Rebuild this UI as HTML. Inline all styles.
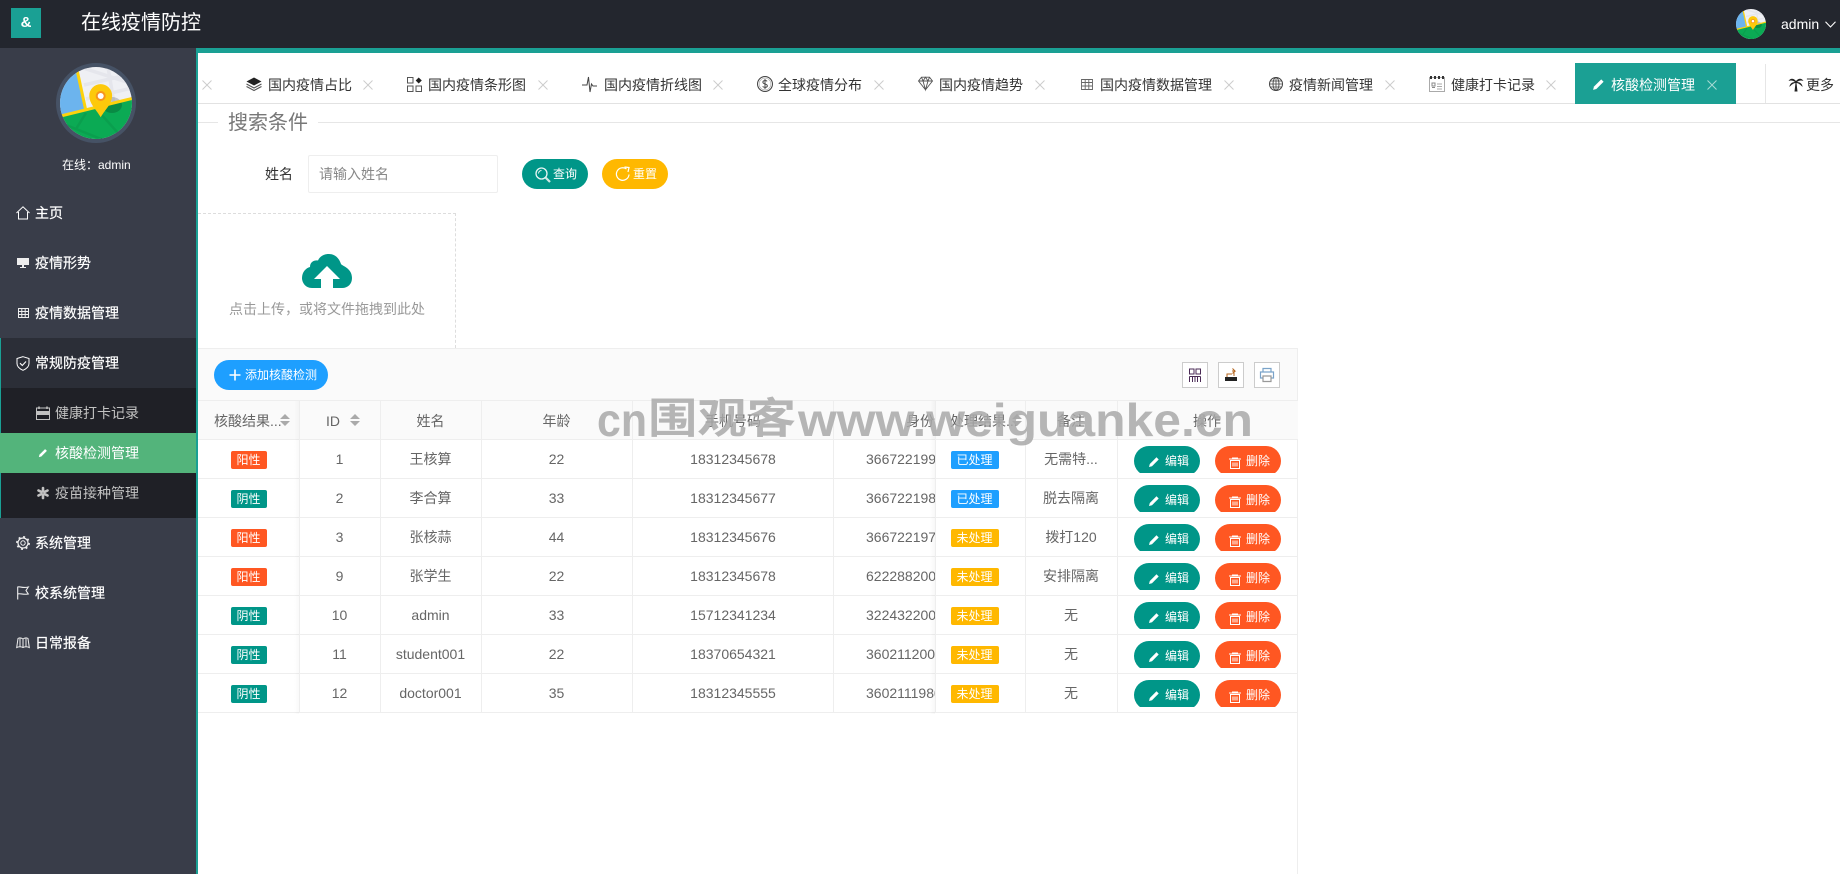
<!DOCTYPE html>
<html lang="zh-CN">
<head>
<meta charset="utf-8">
<title>在线疫情防控</title>
<style>
*{margin:0;padding:0;box-sizing:border-box}
html,body{width:1840px;height:874px;overflow:hidden;background:#fff}
body{position:relative;font-family:"Liberation Sans","Noto Sans CJK SC",sans-serif;font-size:14px;color:#666}
.a{position:absolute;white-space:nowrap}
svg{display:block;overflow:visible}
#hd{left:0;top:0;width:1840px;height:48px;background:#23262e}
#teal{left:196px;top:48px;width:1644px;height:5px;background:#1aa094}
#sb{left:0;top:48px;width:196px;height:826px;background:#393d49}
#sbl{left:196px;top:48px;width:2px;height:826px;background:#1aa094}
.mi{left:35px;color:#fff;font-size:14px;line-height:20px;height:20px;-webkit-text-stroke:.2px #fff}
.si{left:55px;color:#c2c2c2;font-size:14px;line-height:20px;height:20px}
.ic{position:absolute}
.tt{top:75px;color:#333;line-height:20px;height:20px}
.x{position:absolute;top:80px;width:10px;height:10px}
.row{position:absolute;left:198px;width:1100px;height:39px}
.row>div,.hr>div{position:absolute;top:0;height:38px;line-height:41px;text-align:center;white-space:nowrap;overflow:hidden}
.c1{left:0;width:101px}.c2{left:101px;width:81px}.c3{left:182px;width:101px}.c4{left:283px;width:151px}.c5{left:434px;width:202px}
.c6{left:636px;width:101px;text-align:left!important;padding-left:32px}
.c7{left:737px;width:91px}.c8{left:827px;width:92px}.c9{left:919px;width:180px}
.tag{display:inline-block;height:18px;line-height:18px;border-radius:2px;color:#fff;font-size:12px;text-align:center;vertical-align:top;margin-top:12px}
.t2{width:36px}.t3{width:48px;margin-left:-12px}
.r{background:#ff5722}.g{background:#009688}.b{background:#1e9fff}.y{background:#ffb800}
.bw{position:absolute;top:7px;width:66px;height:27px;overflow:hidden}
.bi{width:66px;height:30px;border-radius:15px;color:#fff;font-size:12px;position:relative}
.bi span{position:absolute;left:31px;top:0;line-height:30px;height:30px}
.bi svg{position:absolute;left:14px;top:9px}
.vl{position:absolute;top:400px;width:1px;height:312px;background:#eee}
.hl{position:absolute;left:198px;width:1100px;height:1px;background:#eee}
.tb{position:absolute;top:362px;width:26px;height:26px;border:1px solid #ccc;background:#fff}
.tb svg{position:absolute;left:4px;top:4px}
</style>
</head>
<body>
<svg width="0" height="0" style="position:absolute">
<defs>
<clipPath id="mc"><circle cx="40" cy="40" r="36"/></clipPath>
<symbol id="map" viewBox="0 0 80 80">
<g clip-path="url(#mc)">
<rect width="80" height="80" fill="#eff0f4"/>
<path d="M24 4 L80 22 M28 22 L80 10 M52 4 L58 40 M30 36 L80 24" stroke="#e5e6ec" stroke-width="3.5" fill="none"/>
<path d="M0 0 H20 L29.500 47 L0 54Z" fill="#6cb4ee"/>
<path d="M0 54.200 L80 34.500 V80 H0Z" fill="#0baa54"/>
<path d="M20 66 L30 50 M10 62 L50 78 M44 50 L62 70" stroke="#0a9f4e" stroke-width="2.500" fill="none"/>
<ellipse cx="56" cy="42" rx="10" ry="8" fill="#000" opacity=".18"/>
<path d="M20 2 L29.500 46" stroke="#fdd20c" stroke-width="3" fill="none"/>
<path d="M0 54.200 L80 34.500" stroke="#fdd20c" stroke-width="3" fill="none"/>
<path d="M44.700 54.300 C40 46 33.300 41 33.300 32.500 A11.400 11.400 0 0 1 56.100 32.500 C56.100 41 49.400 46 44.700 54.300Z" fill="#fdc90b"/>
<circle cx="44.700" cy="33" r="5" fill="#f7941d"/>
<circle cx="44.700" cy="33" r="3" fill="#fff"/>
</g>
</symbol>
<symbol id="pen" viewBox="0 0 12 12"><path d="M1 11 L1.800 8 L8.500 1.300 L10.700 3.500 L4 10.200Z" fill="currentColor"/></symbol>
<symbol id="xx" viewBox="0 0 10 10"><path d="M.5 .5 L9.500 9.500 M9.500 .5 L.5 9.500" stroke="currentColor" stroke-width="1" fill="none"/></symbol>
<symbol id="sort" viewBox="0 0 10 12"><path d="M5 0 L10 5 H0Z M0 7 H10 L5 12Z" fill="#aaa"/></symbol>
</defs>
</svg>

<div class="a" id="hd"></div>
<div class="a" id="teal"></div>
<div class="a" style="left:11px;top:8px;width:30px;height:30px;background:#1aa094;color:#fff;text-align:center;line-height:29px;font-size:15px;font-weight:bold">&amp;</div>
<div class="a" style="left:81px;top:9px;color:#fff;font-size:20px;line-height:28px">在线疫情防控</div>
<svg class="a" style="left:1736px;top:9px" width="30" height="30" viewBox="4 4 72 72"><use href="#map" x="0" y="0" width="80" height="80"/></svg>
<div class="a" style="left:1781px;top:14px;color:#fff;font-size:14px;line-height:20px">admin</div>
<svg class="a" style="left:1825px;top:21px" width="11" height="7" viewBox="0 0 11 7"><path d="M.5 .8 L5.500 6 L10.500 .8" stroke="#fff" stroke-width="1.100" fill="none"/></svg>

<div class="a" id="sb"></div>
<div class="a" id="sbl"></div>
<svg class="a" style="left:52px;top:59px" width="88" height="88" viewBox="0 0 88 88"><circle cx="44" cy="44" r="38" fill="none" stroke="#465265" stroke-width="4"/><use href="#map" x="4" y="4" width="80" height="80"/></svg>
<div class="a" style="left:62px;top:155px;color:#fff;font-size:12px;line-height:20px">在线：admin</div>

<div class="a" style="left:0;top:338px;width:196px;height:50px;background:#2b2e37"></div>
<div class="a" style="left:0;top:388px;width:196px;height:130px;background:#1f2026"></div>
<div class="a" style="left:0;top:433px;width:196px;height:40px;background:#53b47b"></div>
<div class="a" style="left:0;top:338px;width:1px;height:95px;background:#1aa094"></div>
<div class="a" style="left:0;top:473px;width:1px;height:45px;background:#1aa094"></div>

<svg class="a" style="left:16px;top:206px" width="14" height="14" viewBox="0 0 14 14"><path d="M.5 7 L7 .8 L13.500 7 M2.500 6 V13 H11.500 V6" stroke="#fff" stroke-width="1" fill="none"/></svg>
<div class="a mi" style="top:203px">主页</div>
<svg class="a" style="left:16px;top:257px" width="14" height="12" viewBox="0 0 14 12"><path d="M1 1 H13 V8 H8 V10 H10 V11 H4 V10 H6 V8 H1Z" fill="#eee"/></svg>
<div class="a mi" style="top:253px">疫情形势</div>
<svg class="a" style="left:18px;top:308px" width="11" height="10" viewBox="0 0 11 10"><path d="M.5 .5 H10.500 V9.500 H.5Z M.5 3.500 H10.500 M.5 6.500 H10.500 M3.800 .5 V9.500 M7.200 .5 V9.500" stroke="#eee" stroke-width="1" fill="none"/></svg>
<div class="a mi" style="top:303px">疫情数据管理</div>
<svg class="a" style="left:16px;top:356px" width="14" height="15" viewBox="0 0 14 15"><path d="M7 .7 L13 2.500 V7.500 C13 11 10 13 7 14.300 C4 13 1 11 1 7.500 V2.500Z" stroke="#fff" stroke-width="1" fill="none"/><path d="M4 7.200 L6.300 9.500 L10 5.500" stroke="#fff" stroke-width="1.100" fill="none"/></svg>
<div class="a mi" style="top:353px">常规防疫管理</div>
<svg class="a" style="left:36px;top:406px" width="14" height="14" viewBox="0 0 14 14"><path d="M.5 2 H13.500 V13.500 H.5Z" stroke="#c2c2c2" fill="none"/><path d="M1 5 H13 V9 H1Z" fill="#c2c2c2"/><path d="M3 .5 V3 M11 .5 V3" stroke="#c2c2c2" stroke-width="1.500"/></svg>
<div class="a si" style="top:403px">健康打卡记录</div>
<svg class="a" style="left:38px;top:448px;color:#fff" width="10" height="10"><use href="#pen" width="10" height="10"/></svg>
<div class="a si" style="top:443px;color:#fff">核酸检测管理</div>
<svg class="a" style="left:37px;top:487px" width="12" height="12" viewBox="0 0 12 12"><g stroke="#c2c2c2" stroke-width="2.600" fill="none" stroke-linecap="round"><path d="M6 1 V4.500 M6 7.500 V11 M1.500 3.500 L4.500 5 M7.500 7 L10.500 8.500 M1.500 8.500 L4.500 7 M7.500 5 L10.500 3.500"/></g></svg>
<div class="a si" style="top:483px">疫苗接种管理</div>
<svg class="a" style="left:16px;top:536px" width="14" height="14" viewBox="0 0 14 14"><circle cx="7" cy="7" r="5" stroke="#eee" stroke-width="1.200" fill="none"/><circle cx="7" cy="7" r="2.200" stroke="#eee" stroke-width="1" fill="none"/><circle cx="7" cy="7" r="6.200" stroke="#eee" stroke-width="1.500" stroke-dasharray="2 2.860" fill="none"/></svg>
<div class="a mi" style="top:533px">系统管理</div>
<svg class="a" style="left:17px;top:586px" width="12" height="14" viewBox="0 0 12 14"><path d="M.7 13.500 V1 C3 0 5 2.500 11.300 1 L9 4.500 L11.300 8 C6 9 3 7 .7 8" stroke="#eee" stroke-width="1.100" fill="none"/></svg>
<div class="a mi" style="top:583px">校系统管理</div>
<svg class="a" style="left:16px;top:637px" width="14" height="12" viewBox="0 0 14 12"><path d="M7 2 C5 .7 3 .7 2 1.500 L.7 10.500 C3 9.500 5 9.500 7 10.500 C9 9.500 11 9.500 13.300 10.500 L12 1.500 C11 .7 9 .7 7 2Z M7 2 V10.500 M4 1.500 V9.500 M10 1.500 V9.500" stroke="#eee" stroke-width="1" fill="none"/></svg>
<div class="a mi" style="top:633px">日常报备</div>

<!-- tabs -->
<div class="a" style="left:198px;top:103px;width:1642px;height:1px;background:#e2e2e2"></div>
<svg class="x" style="left:202px;color:#ccc"><use href="#xx" width="10" height="10"/></svg>

<svg class="a" style="left:246px;top:77px" width="16" height="15" viewBox="0 0 16 15"><path d="M8 .5 L15.500 4.500 L8 8.500 L.5 4.500Z" fill="#222"/><path d="M.5 7 L8 11 L15.500 7 M.5 9.500 L8 13.500 L15.500 9.500" stroke="#555" stroke-width="1.100" fill="none"/></svg>
<div class="a tt" style="left:268px">国内疫情占比</div>
<svg class="x" style="left:363px;color:#ccc"><use href="#xx" width="10" height="10"/></svg>

<svg class="a" style="left:407px;top:77px" width="15" height="15" viewBox="0 0 15 15"><path d="M.5 .5 H6 V6 H.5Z M.5 9 H6 V14.500 H.5Z M9 9 H14.500 V14.500 H9Z" stroke="#555" fill="none"/><path d="M11.700 .5 L14.800 3.500 L11.700 6.500 L8.700 3.500Z" fill="#222"/></svg>
<div class="a tt" style="left:428px">国内疫情条形图</div>
<svg class="x" style="left:538px;color:#ccc"><use href="#xx" width="10" height="10"/></svg>

<svg class="a" style="left:582px;top:76px" width="15" height="17" viewBox="0 0 15 17"><path d="M0 9 H3 L5 9 L6.500 1 L8 16 L9.500 8 L11 10 H15" stroke="#444" fill="none"/></svg>
<div class="a tt" style="left:604px">国内疫情折线图</div>
<svg class="x" style="left:713px;color:#ccc"><use href="#xx" width="10" height="10"/></svg>

<svg class="a" style="left:757px;top:76px" width="16" height="16" viewBox="0 0 15 15"><circle cx="7.500" cy="7.500" r="7" stroke="#444" fill="none"/><circle cx="7.500" cy="7.500" r="5.500" stroke="#999" stroke-width=".5" fill="none"/><path d="M9.500 5 C8.500 3.800 5.500 4 5.500 5.800 C5.500 8 9.700 7 9.700 9.300 C9.700 11 6.500 11 5.300 9.800 M7.500 2.800 V12.200" stroke="#444" stroke-width=".9" fill="none"/></svg>
<div class="a tt" style="left:778px">全球疫情分布</div>
<svg class="x" style="left:874px;color:#ccc"><use href="#xx" width="10" height="10"/></svg>

<svg class="a" style="left:918px;top:76px" width="15" height="15" viewBox="0 0 15 14"><path d="M3.500 .7 H11.500 L14.500 4.500 L7.500 13.300 L.5 4.500Z M.5 4.500 H14.500 M5 4.500 L7.500 13.300 L10 4.500 M3.500 .7 L5 4.500 L7.500 .7 L10 4.500 L11.500 .7" stroke="#555" stroke-width=".9" fill="none"/></svg>
<div class="a tt" style="left:939px">国内疫情趋势</div>
<svg class="x" style="left:1035px;color:#ccc"><use href="#xx" width="10" height="10"/></svg>

<svg class="a" style="left:1081px;top:79px" width="12" height="11" viewBox="0 0 12 11"><path d="M.5 .5 H11.500 V10.500 H.5Z M.5 3.500 H11.500 M.5 7 H11.500 M4.200 .5 V10.500 M7.800 .5 V10.500" stroke="#666" stroke-width=".9" fill="none"/></svg>
<div class="a tt" style="left:1100px">国内疫情数据管理</div>
<svg class="x" style="left:1224px;color:#ccc"><use href="#xx" width="10" height="10"/></svg>

<svg class="a" style="left:1269px;top:77px" width="14" height="14" viewBox="0 0 14 14"><circle cx="7" cy="7" r="6.500" stroke="#444" fill="none"/><ellipse cx="7" cy="7" rx="3" ry="6.500" stroke="#444" stroke-width=".9" fill="none"/><path d="M.5 7 H13.500 M1.300 4 H12.700 M1.300 10 H12.700 M7 .5 V13.500" stroke="#444" stroke-width=".8" fill="none"/></svg>
<div class="a tt" style="left:1289px">疫情新闻管理</div>
<svg class="x" style="left:1385px;color:#ccc"><use href="#xx" width="10" height="10"/></svg>

<svg class="a" style="left:1429px;top:75px" width="16" height="17" viewBox="0 0 16 17"><path d="M.5 2.500 H15.500 V16.500 H.5Z" stroke="#aaa" fill="none"/><path d="M1 1 H3 V4 H1Z M5 1 H7 V4 H5Z M9 1 H11 V4 H9Z M13 1 H15 V4 H13Z" fill="#333"/><path d="M3 8 H6 V11 H3Z M3 12.500 H6" stroke="#888" fill="none"/><path d="M8 9 H13 M8 11.500 H13 M8 14 H13" stroke="#aaa"/></svg>
<div class="a tt" style="left:1451px">健康打卡记录</div>
<svg class="x" style="left:1546px;color:#ccc"><use href="#xx" width="10" height="10"/></svg>

<div class="a" style="left:1575px;top:63px;width:161px;height:41px;background:#1ba094"></div>
<svg class="a" style="left:1592px;top:78px;color:#fff" width="13" height="13"><use href="#pen" width="13" height="13"/></svg>
<div class="a tt" style="left:1611px;color:#fff">核酸检测管理</div>
<svg class="x" style="left:1707px;color:#a8dad5"><use href="#xx" width="10" height="10"/></svg>

<div class="a" style="left:1765px;top:64px;width:1px;height:39px;background:#e6e6e6"></div>
<svg class="a" style="left:1788px;top:76px" width="16" height="16" viewBox="0 0 16 16"><path d="M8 5 C5 1.500 2 2.500 .5 5 C3 4 5 4.500 7 6 C4 6 1.500 8 1.500 11 C3.500 8.500 6 7 7.500 7 L6.500 15.500 H9.500 L8.500 7 C10 7 12.500 8.500 14.500 11 C14.500 8 12 6 9 6 C11 4.500 13 4 15.500 5 C14 2.500 11 1.500 8 5Z" fill="#222"/></svg>
<div class="a tt" style="left:1806px">更多</div>

<!-- search -->
<div class="a" style="left:198px;top:122px;width:20px;height:1px;background:#e6e6e6"></div>
<div class="a" style="left:318px;top:122px;width:1522px;height:1px;background:#e6e6e6"></div>
<div class="a" style="left:228px;top:109px;font-size:20px;line-height:28px;color:#777">搜索条件</div>
<div class="a" style="left:265px;top:164px;line-height:20px;color:#333">姓名</div>
<div class="a" style="left:308px;top:155px;width:190px;height:38px;border:1px solid #eee;border-radius:2px;line-height:36px;padding-left:10px;color:#888">请输入姓名</div>
<div class="a" style="left:522px;top:159px;width:66px;height:30px;border-radius:15px;background:#009688;color:#fff;font-size:12px;line-height:30px;padding-left:31px">查询</div>
<svg class="a" style="left:535px;top:167px" width="16" height="16" viewBox="0 0 16 16"><circle cx="6.500" cy="6.500" r="5.500" stroke="#e8f5f3" stroke-width="1.300" fill="none"/><path d="M3.500 6.500 A3 3 0 0 1 6.500 3.500" stroke="#e8f5f3" fill="none"/><path d="M10.500 10.500 L15 15" stroke="#cfe8e5" stroke-width="2.200"/></svg>
<div class="a" style="left:602px;top:159px;width:66px;height:30px;border-radius:15px;background:#ffb800;color:#fff;font-size:12px;line-height:30px;padding-left:31px">重置</div>
<svg class="a" style="left:615px;top:166px" width="16" height="16" viewBox="0 0 16 16"><path d="M14 8.500 A6.300 6.300 0 1 1 11.500 3 M9.500 1 L14 1.500 L13 6" stroke="#fff" stroke-width="1.200" fill="none"/></svg>

<!-- upload -->
<div class="a" style="left:198px;top:213px;width:258px;height:135px;border:1px dashed #ddd;border-left:0;border-bottom:0"></div>
<svg class="a" style="left:302px;top:254px" width="50" height="34" viewBox="0 0 50 34"><path d="M10 34 C3 34 0 28 0 24 C0 18 4 14 8 13 C8 8 12 6 16 6.500 C18 2 22 0 27 0 C33 0 37 4 39 10 C40 12 50 14 50 24 C50 30 46 34 40 34 H31 V25 H38 L25 12 L12 25 H19 V34Z" fill="#009688"/></svg>
<div class="a" style="left:229px;top:299px;color:#999;line-height:20px">点击上传，或将文件拖拽到此处</div>

<!-- toolbar -->
<div class="a" style="left:198px;top:348px;width:1100px;height:53px;background:#fafafa;border-top:1px solid #eee;border-bottom:1px solid #eee"></div>
<div class="a" style="left:1297px;top:348px;width:1px;height:526px;background:#eee"></div>
<div class="a" style="left:214px;top:360px;width:114px;height:30px;border-radius:15px;background:#1e9fff;color:#fff;font-size:12px;line-height:30px;padding-left:31px">添加核酸检测</div>
<svg class="a" style="left:229px;top:369px" width="12" height="12" viewBox="0 0 12 12"><path d="M6 .5 V11.500 M.5 6 H11.500" stroke="#fff" stroke-width="1.600"/></svg>
<div class="tb" style="left:1182px"><svg width="16" height="16" viewBox="0 0 16 16"><path d="M2.500 2 H7 V7 H2.500Z M9 2 H13.500 V7 H9Z M2.500 9.500 V15 M5.500 9.500 V15 M8 9.500 V15 M10.500 9.500 V15 M13.500 9.500 V15 M2.500 9.500 H13.500" stroke="#4a2a55" fill="none"/></svg></div>
<div class="tb" style="left:1218px"><svg width="16" height="16" viewBox="0 0 16 16"><path d="M2 10 H14 V14 H2Z" fill="#222"/><path d="M4 10 V7 H9 M9 4 H12 L9.500 1.500 M12 4 L9.500 6.500 M11 5 V9" stroke="#b5651d" fill="none"/></svg></div>
<div class="tb" style="left:1254px"><svg width="16" height="16" viewBox="0 0 16 16"><path d="M4 5 V1.500 H12 V5 M4 11 H1.500 V5 H14.500 V11 H12" stroke="#7aa3c9" stroke-width="1.200" fill="none"/><path d="M4 9 H12 V14.500 H4Z" stroke="#999" stroke-width="1.200" fill="none"/></svg></div>

<!-- table header -->
<div class="a" style="left:198px;top:401px;width:1100px;height:38px;background:#fafafa"></div>
<div class="hl" style="top:439px"></div>
<div class="hl" style="top:478px"></div>
<div class="hl" style="top:517px"></div>
<div class="hl" style="top:556px"></div>
<div class="hl" style="top:595px"></div>
<div class="hl" style="top:634px"></div>
<div class="hl" style="top:673px"></div>
<div class="hl" style="top:712px"></div>
<div class="vl" style="left:380px"></div>
<div class="vl" style="left:481px"></div>
<div class="vl" style="left:632px"></div>
<div class="vl" style="left:833px"></div>
<div class="vl" style="left:1025px"></div>
<div class="vl" style="left:1117px"></div>

<div class="row hr" style="top:401px">
<div class="c1" style="text-align:left;padding-left:16px">核酸结果...</div>
<div class="c2" style="text-align:left;padding-left:27px">ID</div>
<div class="c3">姓名</div>
<div class="c4">年龄</div>
<div class="c5">手机号码</div>
<div class="c6" style="padding-left:72px">身份证号码</div>
<div class="c7" style="text-align:left;padding-left:15px">处理结果...</div>
<div class="c8">备注</div>
<div class="c9">操作</div>
</div>

<div class="row" style="top:439px"><div class="c1"><span class="tag t2 r">阳性</span></div><div class="c2">1</div><div class="c3">王核算</div><div class="c4">22</div><div class="c5">18312345678</div><div class="c6">366722199001011234</div><div class="c7"><span class="tag t3 b">已处理</span></div><div class="c8">无需特...</div></div>
<div class="row" style="top:478px"><div class="c1"><span class="tag t2 g">阴性</span></div><div class="c2">2</div><div class="c3">李合算</div><div class="c4">33</div><div class="c5">18312345677</div><div class="c6">366722198001011234</div><div class="c7"><span class="tag t3 b">已处理</span></div><div class="c8">脱去隔离</div></div>
<div class="row" style="top:517px"><div class="c1"><span class="tag t2 r">阳性</span></div><div class="c2">3</div><div class="c3">张核蒜</div><div class="c4">44</div><div class="c5">18312345676</div><div class="c6">366722197001011234</div><div class="c7"><span class="tag t3 y">未处理</span></div><div class="c8">拨打120</div></div>
<div class="row" style="top:556px"><div class="c1"><span class="tag t2 r">阳性</span></div><div class="c2">9</div><div class="c3">张学生</div><div class="c4">22</div><div class="c5">18312345678</div><div class="c6">622288200001011234</div><div class="c7"><span class="tag t3 y">未处理</span></div><div class="c8">安排隔离</div></div>
<div class="row" style="top:595px"><div class="c1"><span class="tag t2 g">阴性</span></div><div class="c2">10</div><div class="c3">admin</div><div class="c4">33</div><div class="c5">15712341234</div><div class="c6">322432200001011234</div><div class="c7"><span class="tag t3 y">未处理</span></div><div class="c8">无</div></div>
<div class="row" style="top:634px"><div class="c1"><span class="tag t2 g">阴性</span></div><div class="c2">11</div><div class="c3">student001</div><div class="c4">22</div><div class="c5">18370654321</div><div class="c6">360211200001011234</div><div class="c7"><span class="tag t3 y">未处理</span></div><div class="c8">无</div></div>
<div class="row" style="top:673px"><div class="c1"><span class="tag t2 g">阴性</span></div><div class="c2">12</div><div class="c3">doctor001</div><div class="c4">35</div><div class="c5">18312345555</div><div class="c6">360211198001011234</div><div class="c7"><span class="tag t3 y">未处理</span></div><div class="c8">无</div></div>

<!-- fixed col lines & shadows -->
<div class="a" style="left:299px;top:401px;width:1px;height:311px;background:#eee"></div>
<div class="a" style="left:294px;top:401px;width:5px;height:313px;background:linear-gradient(to right,rgba(0,0,0,0),rgba(0,0,0,.025))"></div>
<div class="a" style="left:935px;top:401px;width:1px;height:311px;background:#eee"></div>
<div class="a" style="left:930px;top:401px;width:5px;height:313px;background:linear-gradient(to left,rgba(0,0,0,.03),rgba(0,0,0,0))"></div>

<svg class="a" style="left:280px;top:414px" width="10" height="12"><use href="#sort" width="10" height="12"/></svg>
<svg class="a" style="left:350px;top:414px" width="10" height="12"><use href="#sort" width="10" height="12"/></svg>
<svg class="a" style="left:1012px;top:414px" width="10" height="12"><use href="#sort" width="10" height="12"/></svg>

<!-- action buttons -->
<div class="bw" style="left:1134px;top:446px"><div class="bi g"><svg width="12" height="12" style="color:#fff;top:10px"><use href="#pen" width="12" height="12"/></svg><span>编辑</span></div></div>
<div class="bw" style="left:1215px;top:446px"><div class="bi r"><svg width="12" height="12" viewBox="0 0 12 12" style="top:11px"><path d="M0 2 H12 M3 1 H9 M1.500 3.500 H10.500 V11.500 H1.500Z M4 5.500 V9.500 M6 5.500 V9.500 M8 5.500 V9.500" stroke="#fff" fill="none"/></svg><span>删除</span></div></div>
<div class="bw" style="left:1134px;top:485px"><div class="bi g"><svg width="12" height="12" style="color:#fff;top:10px"><use href="#pen" width="12" height="12"/></svg><span>编辑</span></div></div>
<div class="bw" style="left:1215px;top:485px"><div class="bi r"><svg width="12" height="12" viewBox="0 0 12 12" style="top:11px"><path d="M0 2 H12 M3 1 H9 M1.500 3.500 H10.500 V11.500 H1.500Z M4 5.500 V9.500 M6 5.500 V9.500 M8 5.500 V9.500" stroke="#fff" fill="none"/></svg><span>删除</span></div></div>
<div class="bw" style="left:1134px;top:524px"><div class="bi g"><svg width="12" height="12" style="color:#fff;top:10px"><use href="#pen" width="12" height="12"/></svg><span>编辑</span></div></div>
<div class="bw" style="left:1215px;top:524px"><div class="bi r"><svg width="12" height="12" viewBox="0 0 12 12" style="top:11px"><path d="M0 2 H12 M3 1 H9 M1.500 3.500 H10.500 V11.500 H1.500Z M4 5.500 V9.500 M6 5.500 V9.500 M8 5.500 V9.500" stroke="#fff" fill="none"/></svg><span>删除</span></div></div>
<div class="bw" style="left:1134px;top:563px"><div class="bi g"><svg width="12" height="12" style="color:#fff;top:10px"><use href="#pen" width="12" height="12"/></svg><span>编辑</span></div></div>
<div class="bw" style="left:1215px;top:563px"><div class="bi r"><svg width="12" height="12" viewBox="0 0 12 12" style="top:11px"><path d="M0 2 H12 M3 1 H9 M1.500 3.500 H10.500 V11.500 H1.500Z M4 5.500 V9.500 M6 5.500 V9.500 M8 5.500 V9.500" stroke="#fff" fill="none"/></svg><span>删除</span></div></div>
<div class="bw" style="left:1134px;top:602px"><div class="bi g"><svg width="12" height="12" style="color:#fff;top:10px"><use href="#pen" width="12" height="12"/></svg><span>编辑</span></div></div>
<div class="bw" style="left:1215px;top:602px"><div class="bi r"><svg width="12" height="12" viewBox="0 0 12 12" style="top:11px"><path d="M0 2 H12 M3 1 H9 M1.500 3.500 H10.500 V11.500 H1.500Z M4 5.500 V9.500 M6 5.500 V9.500 M8 5.500 V9.500" stroke="#fff" fill="none"/></svg><span>删除</span></div></div>
<div class="bw" style="left:1134px;top:641px"><div class="bi g"><svg width="12" height="12" style="color:#fff;top:10px"><use href="#pen" width="12" height="12"/></svg><span>编辑</span></div></div>
<div class="bw" style="left:1215px;top:641px"><div class="bi r"><svg width="12" height="12" viewBox="0 0 12 12" style="top:11px"><path d="M0 2 H12 M3 1 H9 M1.500 3.500 H10.500 V11.500 H1.500Z M4 5.500 V9.500 M6 5.500 V9.500 M8 5.500 V9.500" stroke="#fff" fill="none"/></svg><span>删除</span></div></div>
<div class="bw" style="left:1134px;top:680px"><div class="bi g"><svg width="12" height="12" style="color:#fff;top:10px"><use href="#pen" width="12" height="12"/></svg><span>编辑</span></div></div>
<div class="bw" style="left:1215px;top:680px"><div class="bi r"><svg width="12" height="12" viewBox="0 0 12 12" style="top:11px"><path d="M0 2 H12 M3 1 H9 M1.500 3.500 H10.500 V11.500 H1.500Z M4 5.500 V9.500 M6 5.500 V9.500 M8 5.500 V9.500" stroke="#fff" fill="none"/></svg><span>删除</span></div></div>

<!-- watermark -->
<svg class="a" style="left:0;top:0;pointer-events:none" width="1840" height="874" viewBox="0 0 1840 874">
<g fill="#a8a8a8" fill-opacity=".85" font-family="'Liberation Sans','Noto Sans CJK SC',sans-serif" font-weight="bold">
<text x="597" y="436" font-size="46" textLength="50" lengthAdjust="spacingAndGlyphs">cn</text>
<text x="648" y="433" font-size="42" textLength="148" lengthAdjust="spacingAndGlyphs">围观客</text>
<text x="798" y="436" font-size="46" textLength="455" lengthAdjust="spacingAndGlyphs">www.weiguanke.cn</text>
</g>
</svg>
</body>
</html>
